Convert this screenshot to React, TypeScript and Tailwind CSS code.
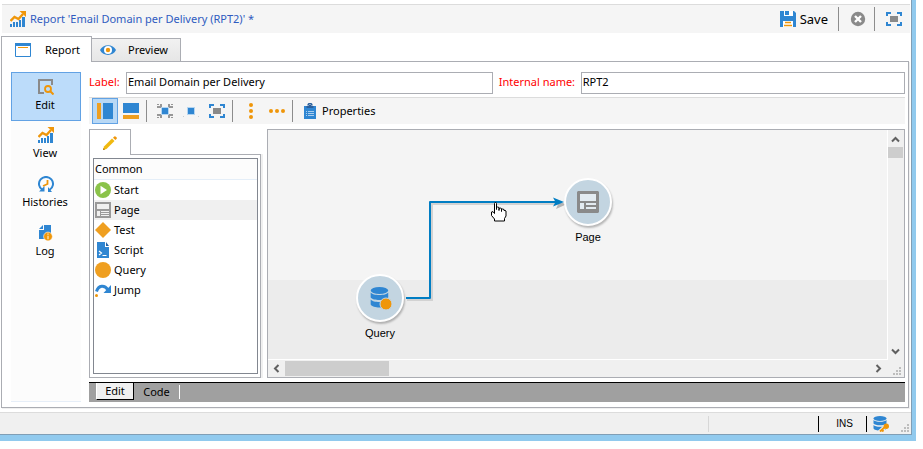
import type { ReactNode } from "react";

const BLUE = "#2f86d2";
const ORANGE = "#ef960a";
const GREY = "#8a8a8a";

function Icon({ children }: { children: ReactNode }) {
  return (
    <svg width="16" height="16" viewBox="0 0 16 16" aria-hidden="true" className="block shrink-0">
      {children}
    </svg>
  );
}

const ChartIcon = () => (
  <Icon>
    <path d="M0 13h2v3H0zM3 11h2v5H3zM6 11h2v5H6zM9 9h2v7H9zM12 6h3v10h-3z" fill={BLUE} />
    <path d="M.5 10 4.500 6l4 2L13 3" fill="none" stroke={ORANGE} strokeWidth="2.400" />
    <path d="M9.500 0H16v6z" fill={ORANGE} />
  </Icon>
);

const WindowIcon = () => (
  <Icon>
    <path d="M.5 1.500h15v13H.5z" fill="#fff" stroke={BLUE} />
    <path d="M0 1h16v3H0z" fill={BLUE} />
    <path d="M3 5.500h10" stroke={ORANGE} />
  </Icon>
);

const EyeIcon = () => (
  <Icon>
    <path d="M0 8C3 1.500 13 1.500 16 8 13 14.500 3 14.500 0 8z" fill={BLUE} />
    <circle cx="8" cy="8" r="4" fill="#fff" />
    <circle cx="8" cy="8" r="2.200" fill={ORANGE} />
  </Icon>
);

const SaveIcon = () => (
  <Icon>
    <path d="M0 0h14l2 2v14H0z" fill={BLUE} />
    <path d="M4 0h9v5H4z" fill="#fff" />
    <path d="M5 0h4v4H5z" fill={BLUE} />
    <path d="M3 10h10v6H3z" fill="#fff" />
    <path d="M5 11.500h6M4 14.500h8" stroke={ORANGE} strokeWidth="1.400" />
  </Icon>
);

const CloseIcon = () => (
  <Icon>
    <circle cx="8" cy="8" r="7.200" fill={GREY} />
    <path d="m5 5 6 6m0-6-6 6" stroke="#fff" strokeWidth="2.400" />
  </Icon>
);

const FullIcon = () => (
  <Icon>
    <path d="M1 5V2h4M11 2h4v3M15 11v3h-4M5 14H1v-3" fill="none" stroke={BLUE} strokeWidth="2" />
    <path d="M4 5h8v6H4z" fill={GREY} />
  </Icon>
);

const EditIcon = () => (
  <Icon>
    <path d="M6 14H1V1h13v5" fill="none" stroke={GREY} strokeWidth="2" />
    <circle cx="10" cy="10" r="3" fill="none" stroke={ORANGE} strokeWidth="1.800" />
    <path d="m12 12 3.500 3.500" stroke={ORANGE} strokeWidth="2" />
  </Icon>
);

const HistoryIcon = () => (
  <Icon>
    <path d="M4.500 14A7 7 0 1 1 11.500 14" fill="none" stroke={BLUE} strokeWidth="2" />
    <path d="M1 15.500h5.500V10zM10 11v5h4z" fill={BLUE} />
    <path d="M9.500 4v4L5 10" fill="none" stroke={ORANGE} strokeWidth="1.800" />
  </Icon>
);

const LogIcon = () => (
  <Icon>
    <path d="M6 0h7v14H1V5h5z" fill={BLUE} />
    <path d="M1 4 5 0v4z" fill={BLUE} />
    <circle cx="10" cy="11.500" r="4.400" fill={ORANGE} stroke="#fff" strokeWidth=".6" />
    <path d="M10 8.500v1.300M10 10.800v3.400" stroke="#fbe0a8" strokeWidth="1.400" />
  </Icon>
);

const LeftPaneIcon = () => (
  <Icon>
    <path d="M0 0h4v16H0z" fill="#ef9f20" />
    <path d="M6 0h10v16H6z" fill={BLUE} />
  </Icon>
);

const BottomPaneIcon = () => (
  <Icon>
    <path d="M0 0h16v10H0z" fill={BLUE} />
    <path d="M0 12h16v4H0z" fill="#ef9f20" />
  </Icon>
);

const FitIcon = () => (
  <Icon>
    <path d="M4 4h8v8H4z" fill="#b5d5f0" />
    <path d="M5 5h6v6H5z" fill={BLUE} />
    <path
      d="M3 1h2v4H0V3h3zM0 1h2v1H0zM13 1h-2v4h5V3h-3zM16 1h-2v1h2zM3 15h2v-4H0v2h3zM0 15h2v-1H0zM13 15h-2v-4h5v2h-3zM16 15h-2v-1h2z"
      fill="#979797"
    />
    <path d="M4 4h8v8H4z" fill="#b5d5f0" />
    <path d="M5 5h6v6H5z" fill={BLUE} />
  </Icon>
);

const SquareIcon = () => (
  <Icon>
    <path d="M4 4h8v8H4z" fill="#b5d5f0" />
    <path d="M5 5h6v6H5z" fill={BLUE} />
    <path d="M0 13h1v1H0zM15 13h1v1h-1z" fill="#ccc" />
  </Icon>
);

const DotsV = () => (
  <Icon>
    <g fill={ORANGE}>
      <circle cx="8" cy="2" r="2" />
      <circle cx="8" cy="8" r="2" />
      <circle cx="8" cy="14" r="2" />
    </g>
  </Icon>
);

const DotsH = () => (
  <Icon>
    <g fill={ORANGE}>
      <circle cx="2" cy="8" r="2" />
      <circle cx="8" cy="8" r="2" />
      <circle cx="14" cy="8" r="2" />
    </g>
  </Icon>
);

const ClipboardIcon = () => (
  <Icon>
    <path d="M2 3h12v13H2z" fill={BLUE} />
    <path d="M4.500 5V3h2a1.500 1.500 0 0 1 3 0h2v2z" fill="#2a5f9c" />
    <path d="M6 2.500a2 2 0 0 1 4 0" fill="none" stroke="#2a5f9c" strokeWidth="1.500" />
    <path d="M4 8.500h1M6 8.500h6M4 10.500h1M6 10.500h6M4 12.500h1M6 12.500h6" stroke="#a9cdee" />
  </Icon>
);

const PencilIcon = () => (
  <Icon>
    <path d="m1 15 1-3.500 8-8 2.500 2.500-8 8z" fill="#f0b90f" />
    <path d="m11 2.700 1.300-1.300q.7-.4 1.200 0l1.200 1.200q.4.600 0 1.200L13.400 5.100z" fill={ORANGE} />
    <path d="m1 15 .6-2 1.400 1.400z" fill="#a86f00" />
  </Icon>
);

const StartIcon = () => (
  <Icon>
    <circle cx="8" cy="8" r="8" fill="#8bc34a" />
    <path d="M5.500 3.800 12 8l-6.500 4.200z" fill="#fff" />
  </Icon>
);

const PageIcon = () => (
  <Icon>
    <path d="M0 0h16v16H0z" fill="#999" />
    <path d="M2 2h12v5H2zM2 9h3v5H2zM6 9h8v1H6zM6 11h8v1H6zM6 13h8v1H6z" fill="#f0f0f0" />
  </Icon>
);

const PageNodeIcon = () => (
  <svg width="22" height="22" viewBox="0 0 22 22" aria-hidden="true">
    <path d="M1 0h20l1 1v20l-1 1H1l-1-1V1z" fill={GREY} />
    <path d="M3 3h16v7H3zM3 12h4v6H3zM9 12h10v2H9zM9 16h10v2H9z" fill="#e3ebf1" />
  </svg>
);

const TestIcon = () => (
  <Icon>
    <path d="m8 0 8 8-8 8-8-8z" fill="#ef9f20" />
  </Icon>
);

const ScriptIcon = () => (
  <Icon>
    <path d="M2 0h8v5h4v11H2z" fill={BLUE} />
    <path d="M11 0v4h3z" fill="#2463a5" />
    <path d="m4 9 2.500 2L4 13M7.500 13.500h4" fill="none" stroke="#fff" strokeWidth="1.200" />
  </Icon>
);

const QueryIcon = () => (
  <Icon>
    <circle cx="8" cy="8" r="8" fill="#ef9f20" />
  </Icon>
);

const JumpIcon = () => (
  <Icon>
    <path d="M1.500 9.500C3.500 3 9.500 2.500 13 8" fill="none" stroke={BLUE} strokeWidth="3" />
    <path d="M16 3v8H8.500z" fill={BLUE} />
    <circle cx="1.500" cy="13.500" r="1.500" fill={ORANGE} />
  </Icon>
);

const Cylinder = () => (
  <g fill={BLUE}>
    <ellipse cx="7" cy="2.500" rx="6.500" ry="2.500" />
    <path d="M.5 4c1.500 2.400 11.500 2.400 13 0v3.500c-1.500 2.400-11.500 2.400-13 0z" />
    <path d="M.5 9c1.500 2.400 11.500 2.400 13 0v3.500c-1.500 2.800-11.500 2.800-13 0z" />
  </g>
);

const DbKeyIcon = () => (
  <Icon>
    <Cylinder />
    <path d="m6.500 16 6-5.500" stroke="#f0f0f0" strokeWidth="4" />
    <path d="m7 15.500 6-5.500M8.500 13.500l2 2" stroke={ORANGE} strokeWidth="2" />
    <circle cx="13.300" cy="10.200" r="2.700" fill={ORANGE} />
  </Icon>
);

const DbQueryIcon = () => (
  <svg width="24" height="24" viewBox="0 0 24 24" aria-hidden="true">
    <g transform="translate(2 1) scale(1.350 1.400)">
      <Cylinder />
    </g>
    <circle cx="18" cy="18" r="6" fill={ORANGE} stroke="#c3d5e1" />
  </svg>
);

function Chevron({ dir }: { dir: "up" | "down" | "left" | "right" }) {
  const paths = {
    up: "M1 6.500 4.500 3 8 6.500",
    down: "M1 2.500 4.500 6 8 2.500",
    left: "M6.500 1 3 4.500 6.500 8",
    right: "M2.500 1 6 4.500 2.500 8",
  };
  return (
    <svg width="9" height="9" viewBox="0 0 9 9" aria-hidden="true" className="block">
      <path d={paths[dir]} fill="none" stroke="#606060" strokeWidth="2" />
    </svg>
  );
}

const Grip = () => (
  <svg width="8" height="8" viewBox="0 0 8 8" aria-hidden="true" className="block shrink-0">
    <path d="M6 0h2v2H6zM3 3h2v2H3zM6 3h2v2H6zM0 6h2v2H0zM3 6h2v2H3zM6 6h2v2H6z" fill="#bdbdbd" />
  </svg>
);

function ToolButton({ label, active, children }: { label: string; active?: boolean; children: ReactNode }) {
  return (
    <button
      aria-label={label}
      aria-pressed={active}
      className={`flex size-[26px] items-center justify-center ${active ? "border border-[#62a2e4] bg-[#b8d8f5]" : ""}`}
    >
      {children}
    </button>
  );
}

const ToolDivider = () => <span className="mr-[5px] ml-0.5 h-[22px] w-px bg-[#8c8c8c]" />;

const navItems = [
  { label: "Edit", icon: <EditIcon /> },
  { label: "View", icon: <ChartIcon /> },
  { label: "Histories", icon: <HistoryIcon /> },
  { label: "Log", icon: <LogIcon /> },
];

const activities = [
  { label: "Start", icon: <StartIcon /> },
  { label: "Page", icon: <PageIcon /> },
  { label: "Test", icon: <TestIcon /> },
  { label: "Script", icon: <ScriptIcon /> },
  { label: "Query", icon: <QueryIcon /> },
  { label: "Jump", icon: <JumpIcon /> },
];

function Node({ label, place, children }: { label: string; place: string; children: ReactNode }) {
  return (
    <div className={`absolute flex w-12 flex-col items-center gap-[5px] ${place}`}>
      <div className="flex size-12 items-center justify-center rounded-full border-2 border-white bg-[#c3d5e1] shadow-[1px_2px_2px_rgba(0,0,0,0.25)]">
        {children}
      </div>
      <span className="font-['Liberation_Sans',sans-serif] text-[11px] leading-3">{label}</span>
    </div>
  );
}

function Canvas() {
  return (
    <section aria-label="Diagram" className="flex min-w-0 flex-1 flex-col border border-[#abadb3] bg-[#f0f0f0]">
      <div className="flex flex-1">
        <div className="relative min-h-[228px] min-w-0 flex-1 overflow-hidden border-r border-b border-white bg-[#ececec]">
          <div className="h-[150px] bg-[#f4f4f4]" />
          <svg width="340" height="220" viewBox="0 0 340 220" aria-hidden="true" className="absolute top-0 left-0">
            <path d="M139 170h25V74h128" fill="none" stroke="#d2d2d2" strokeWidth="2" />
            <path d="m288 70 10 4.500-10 4.500 2-4.500z" fill="#b4b4b4" />
            <path d="M138 168h24V72h128" fill="none" stroke="#007dc3" strokeWidth="2" strokeLinejoin="round" />
            <path d="m285 67.500 11 4.500-11 4.500 2.500-4.500z" fill="#007dc3" />
          </svg>
          <Node label="Query" place="top-36 left-[88px]">
            <DbQueryIcon />
          </Node>
          <Node label="Page" place="top-12 left-[296px]">
            <PageNodeIcon />
          </Node>
          <svg width="17" height="21" viewBox="0 0 17 21" aria-hidden="true" className="absolute top-[71px] left-[222px]">
            <path
              d="M4.500 12.500V2.500q0-1 1-1t1 1v6V6.500q1-1 2.500 0v3V7.500q1-1 2.500 0v3-2q1-1 2.500 0v1q1-.5 2 .5v5l-1.500 2.500v2.500h-10V18L1.500 14.500v-3.500q1.500-1.500 3 1.500z"
              fill="#fff"
              stroke="#000"
            />
          </svg>
        </div>
        <div className="flex w-4 flex-col items-center justify-between pt-[5px] pr-px pb-1">
          <div className="flex w-full flex-col items-center gap-[3px]">
            <Chevron dir="up" />
            <div className="h-[11px] w-full bg-[#cdcdcd]" />
          </div>
          <Chevron dir="down" />
        </div>
      </div>
      <div className="flex h-[17px] items-center pr-[3px] pl-1">
        <Chevron dir="left" />
        <div className="ml-1 h-[15px] w-[104px] bg-[#cdcdcd]" />
        <div className="mr-2.5 ml-auto">
          <Chevron dir="right" />
        </div>
        <div className="pt-1">
          <Grip />
        </div>
      </div>
    </section>
  );
}

export default function App() {
  return (
    <div className="flex min-h-screen bg-white pr-[7px] pb-2 font-['Noto_Sans','Open_Sans',sans-serif] text-[11px] leading-4 text-black">
      <div className="flex min-w-0 flex-1 flex-col border-r-4 border-b-[6px] border-[#91caee]">
        <div className="flex min-w-0 flex-1 flex-col border-r border-b border-[#809eb5] pt-1">
          <header className="mr-px ml-0.5 flex h-[29px] items-center border-t border-[#dcdcdc] bg-[#f5f5f5] px-2">
            <ChartIcon />
            <h1 className="ml-1 text-[#2f5bc0]">Report 'Email Domain per Delivery (RPT2)' *</h1>
            <button className="ml-auto flex items-center gap-1 text-[13px]">
              <SaveIcon />
              Save
            </button>
            <span className="mr-[11px] ml-2.5 h-6 w-px bg-[#8c8c8c]" />
            <button aria-label="Cancel">
              <CloseIcon />
            </button>
            <span className="mr-[11px] ml-2 h-6 w-px bg-[#8c8c8c]" />
            <button aria-label="Full screen">
              <FullIcon />
            </button>
          </header>

          <div role="tablist" className="mt-[3px] ml-px flex h-[25px] items-end">
            <button
              role="tab"
              aria-selected="true"
              className="relative -mb-px flex h-[26px] w-[91px] items-center gap-3.5 border border-b-0 border-[#abadb3] bg-white pl-[13px]"
            >
              <WindowIcon />
              Report
            </button>
            <button
              role="tab"
              aria-selected="false"
              className="flex h-[23px] w-[89px] items-center gap-3 border border-b-0 border-l-0 border-[#abadb3] bg-linear-to-b from-[#f1f1f1] to-[#e6e6e6] pl-2"
            >
              <EyeIcon />
              Preview
            </button>
          </div>

          <main className="mr-0.5 ml-px flex flex-1 gap-2 border border-[#abadb3] pt-2.5 pr-[3px] pb-[5px] pl-[9px] shadow-[1px_1px_0_#f0f0f0]">
            <nav className="flex w-[70px] flex-col border-b border-[#e6eef8] bg-[#fcfcfc]">
              {navItems.map((item) => (
                <button
                  key={item.label}
                  className={`flex h-[49px] flex-col items-center gap-0.5 pt-1.5 ${item.label === "Edit" ? "border border-[#62a2e4] bg-[#bcdcfa]" : ""}`}
                >
                  {item.icon}
                  <span className="pr-0.5">{item.label}</span>
                </button>
              ))}
            </nav>

            <div className="flex min-w-0 flex-1 flex-col">
              <div className="flex h-[22px]">
                <label htmlFor="label" className="w-[37px] leading-5 text-[#ff0000]">
                  Label:
                </label>
                <input
                  id="label"
                  defaultValue="Email Domain per Delivery"
                  className="min-w-0 grow-[367] basis-0 border border-[#abadb3] bg-white px-px pb-0.5 outline-none"
                />
                <label htmlFor="internal" className="ml-1.5 w-[82px] leading-5 whitespace-nowrap text-[#ff0000]">
                  Internal name:
                </label>
                <input
                  id="internal"
                  defaultValue="RPT2"
                  className="min-w-0 grow-[324] basis-0 border border-[#abadb3] bg-white px-px pb-0.5 outline-none"
                />
              </div>

              <div role="toolbar" className="mt-[3px] flex h-[27px] items-center border-t border-[#dcdcdc] bg-[#f5f5f5] pl-[3px]">
                <ToolButton label="Left pane" active>
                  <LeftPaneIcon />
                </ToolButton>
                <ToolButton label="Bottom pane">
                  <BottomPaneIcon />
                </ToolButton>
                <ToolDivider />
                <ToolButton label="Zoom to fit">
                  <FitIcon />
                </ToolButton>
                <ToolButton label="Actual size">
                  <SquareIcon />
                </ToolButton>
                <ToolButton label="Full screen">
                  <FullIcon />
                </ToolButton>
                <ToolDivider />
                <ToolButton label="Align vertically">
                  <DotsV />
                </ToolButton>
                <ToolButton label="Align horizontally">
                  <DotsH />
                </ToolButton>
                <ToolDivider />
                <button className="ml-1 flex items-center gap-1">
                  <ClipboardIcon />
                  Properties
                </button>
              </div>

              <div className="mt-[5px] flex flex-1 gap-1.5">
                <aside className="flex w-[172px] flex-col">
                  <button
                    aria-label="Activities"
                    className="relative -mb-px flex h-[26px] w-[42px] items-center justify-center border border-b-0 border-[#abadb3] bg-white"
                  >
                    <PencilIcon />
                  </button>
                  <div className="flex flex-1 border border-[#abadb3] p-[3px] pr-0.5 shadow-[2px_0_0_#f0f0f0]">
                    <div className="flex-1 border border-[#828790]">
                      <h2 className="h-[21px] border-b border-[#e4eef8] bg-[#fcfcfc] pl-px leading-5">Common</h2>
                      <ul>
                        {activities.map((a) => (
                          <li
                            key={a.label}
                            className={`flex h-5 items-center gap-[3px] pl-px ${a.label === "Page" ? "bg-[#f0f0f0]" : ""}`}
                          >
                            {a.icon}
                            {a.label}
                          </li>
                        ))}
                      </ul>
                    </div>
                  </div>
                </aside>
                <Canvas />
              </div>

              <div role="tablist" className="mt-1 flex h-5 items-start border-t border-black bg-[#a0a0a0] pl-[7px]">
                <button role="tab" aria-selected="true" className="h-[17px] w-[38px] border-r border-b border-l border-r-black border-b-black border-l-white bg-[#f0f0f0] pb-0.5">
                  Edit
                </button>
                <button role="tab" aria-selected="false" className="mt-0.5 h-3.5 w-[46px] border-r border-white leading-3">
                  Code
                </button>
              </div>
            </div>
          </main>

          <footer className="mt-1 flex h-[22px] items-center justify-end border-t border-[#dcdcdc] bg-[#f0f0f0] pr-0.5">
            <span className="h-4 w-px bg-[#d7d7d7]" />
            <span className="ml-[109px] h-4 w-px bg-black" />
            <span className="w-[47px] pl-1 text-center font-['Liberation_Sans',sans-serif] text-[10px]">INS</span>
            <span className="mr-1.5 h-4 w-px bg-black" />
            <DbKeyIcon />
            <span className="ml-3 self-end pb-0.5">
              <Grip />
            </span>
          </footer>
        </div>
      </div>
    </div>
  );
}
